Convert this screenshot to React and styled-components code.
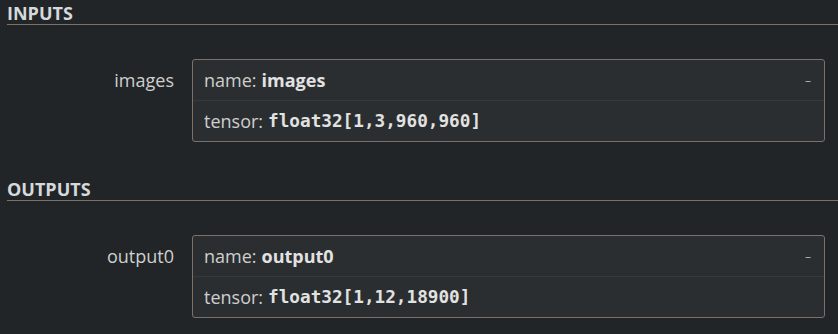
import React from 'react';
import styled, { createGlobalStyle } from 'styled-components';

const GlobalStyle = createGlobalStyle`
  html, body {
    margin: 0;
    padding: 0;
    background: #222527;
  }
  body {
    font-family: "Open Sans", "Noto Sans", sans-serif;
    color: #cfcfcf;
  }
`;

const Sidebar = styled.div`
  width: 838px;
  height: 334px;
  overflow: hidden;
  background: #222527;
`;

const Section = styled.section`
  padding-left: 7px;
`;

const SectionHeader = styled.div`
  margin-top: ${props => props.$first ? '0' : '34px'};
  padding-top: 2px;
  height: 22px;
  line-height: 22px;
  font-size: 18px;
  font-weight: 700;
  color: #d6d9dc;
  border-bottom: 1px solid #7b7168;
`;

const Item = styled.div`
  display: flex;
  margin-top: 34px;
  margin-right: 13px;
`;

const ItemName = styled.div`
  width: 185px;
  flex: none;
  box-sizing: border-box;
  padding-right: 18px;
  padding-top: 1px;
  line-height: 40px;
  font-size: 18px;
  text-align: right;
  color: #cfcfcf;
`;

const ValueBox = styled.div`
  flex: 1;
  background: #2b2e30;
  border: 1px solid #7b7168;
  border-radius: 3px;
`;

const ValueLine = styled.div`
  display: flex;
  align-items: center;
  height: 40px;
  padding: 0 13px 0 11px;
  font-size: 18px;
  color: #cfcfcf;
  border-top: ${props => props.$divided ? '1px solid #36393b' : 'none'};
`;

const Key = styled.span`
  margin-right: 5px;
`;

const Bold = styled.b`
  font-weight: 700;
  color: #e2e2e2;
`;

const Code = styled.code`
  font-family: "DejaVu Sans Mono", "Liberation Mono", monospace;
  font-size: 17.7px;
  font-weight: 700;
  color: #e2e2e2;
`;

const Expander = styled.span`
  margin-left: auto;
  font-size: 12px;
  color: #a9a9a9;
  cursor: pointer;
`;

const Argument = ({ name, type }) => (
  <Item>
    <ItemName>{name}</ItemName>
    <ValueBox>
      <ValueLine>
        <Key>name:</Key>
        <Bold>{name}</Bold>
        <Expander>–</Expander>
      </ValueLine>
      <ValueLine $divided>
        <Key>tensor:</Key>
        <Code>{type}</Code>
      </ValueLine>
    </ValueBox>
  </Item>
);

export default function App() {
  return (
    <Sidebar>
      <GlobalStyle />
      <Section>
        <SectionHeader $first>INPUTS</SectionHeader>
        <Argument name="images" type="float32[1,3,960,960]" />
        <SectionHeader>OUTPUTS</SectionHeader>
        <Argument name="output0" type="float32[1,12,18900]" />
      </Section>
    </Sidebar>
  );
}
